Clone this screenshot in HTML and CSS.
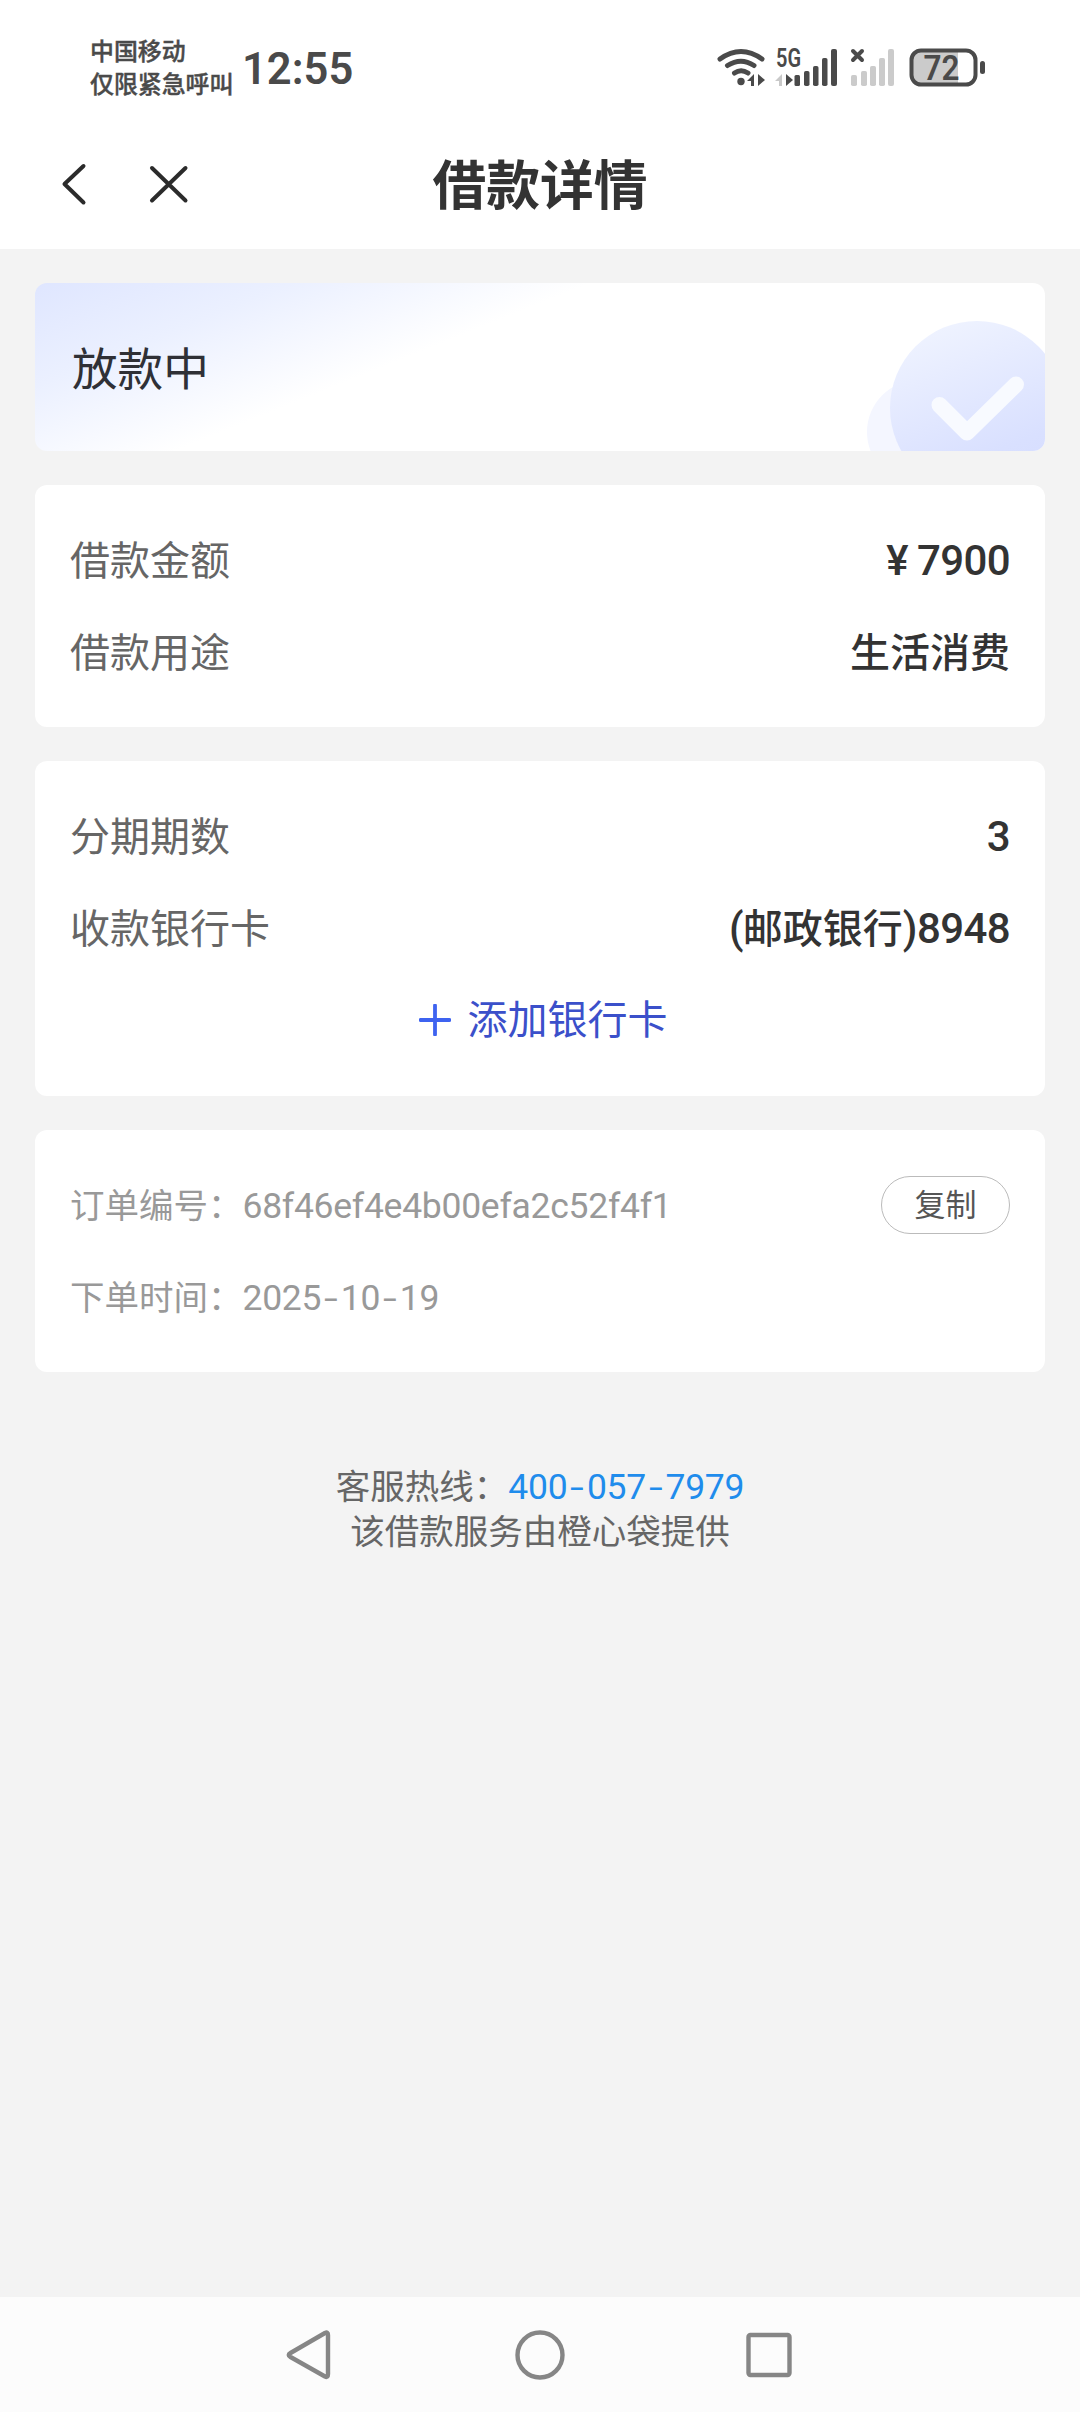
FILE: index.html
```html
<!DOCTYPE html>
<html lang="zh-CN">
<head>
<meta charset="utf-8">
<title>借款详情</title>
<link rel="stylesheet" href="styles.css">
</head>
<body>
<div class="screen">
  <div class="status-bar">
    <div class="carrier"><span>中国移动</span><span>仅限紧急呼叫</span></div>
    <div class="clock">12:55</div>
    <svg class="status-icons" width="300" height="80" viewBox="0 0 300 80">
      <g fill="none" stroke="#4a4a4a" stroke-width="5" stroke-linecap="round">
        <path d="M20 29Q41 14 62 29"/>
        <path d="M27.500 35.500Q41 27 54 35.500"/>
        <path d="M34.500 43Q41 38.500 48 43"/>
      </g>
      <g fill="#4a4a4a">
        <circle cx="41" cy="51.500" r="3.700"/>
        <path d="M47 51L54 44V56H51V51Z"/>
        <path d="M58 44L65 50L58 56Z"/>
        <text class="net" x="76" y="37" textLength="25" lengthAdjust="spacingAndGlyphs">5G</text>
        <path d="M75 51L82 44V56H79V51Z" fill="#c9c9c9"/>
        <path d="M86 44L93 50L86 56Z"/>
        <rect x="94.500" y="45" width="5.500" height="11" rx="1.500"/>
        <rect x="104" y="41" width="5.500" height="15" rx="1.800"/>
        <rect x="113" y="36" width="5.500" height="20" rx="1.800"/>
        <rect x="122" y="28" width="5.500" height="28" rx="1.800"/>
        <rect x="131" y="19" width="6" height="37" rx="2"/>
      </g>
      <path d="M153 21L162 30M162 21L153 30" stroke="#4a4a4a" stroke-width="4" stroke-linecap="round"/>
      <g fill="#cbcbcb">
        <rect x="151" y="45" width="6" height="11" rx="1.800"/>
        <rect x="161" y="41" width="6" height="15" rx="1.800"/>
        <rect x="170" y="36" width="6" height="20" rx="1.800"/>
        <rect x="179" y="28" width="6" height="28" rx="1.800"/>
        <rect x="188" y="19" width="6" height="37" rx="2"/>
      </g>
      <path d="M220 21H258V54H220Q212 54 212 45V30Q212 21 220 21Z" fill="#cbcbcb"/>
      <rect x="211.500" y="20.500" width="64" height="34" rx="9.500" fill="none" stroke="#4a4a4a" stroke-width="4"/>
      <rect x="280" y="31" width="5" height="13" rx="2.500" fill="#4a4a4a"/>
      <text class="level" x="223.500" y="49.500" textLength="36" lengthAdjust="spacingAndGlyphs">72</text>
    </svg>
  </div>
  <header class="title-bar">
    <svg class="nav-icons" width="200" height="112" viewBox="0 0 200 112">
      <g fill="none" stroke="#2b2b2b" stroke-width="4" stroke-linecap="round" stroke-linejoin="round">
        <path d="M83.500 30L64.500 48L83.500 66.500"/>
        <path d="M152 32L185.500 64.500M185.500 32L152 64.500"/>
      </g>
    </svg>
    <h1 class="title">借款详情</h1>
  </header>
  <main class="content">
    <section class="card banner">
      <span class="state">放款中</span>
      <svg class="badge" width="180" height="168" viewBox="0 0 180 168">
        <defs>
          <linearGradient id="disc" x1=".3" y1="0" x2=".7" y2="1">
            <stop offset="0" stop-color="#eff3ff"/><stop offset=".75" stop-color="#d9e0ff"/><stop offset="1" stop-color="#d6ddff"/>
          </linearGradient>
        </defs>
        <circle cx="54" cy="149" r="52" fill="#f4f6ff"/>
        <circle cx="112" cy="125" r="87" fill="url(#disc)"/>
        <path d="M74.500 122L102 149.500L151 101.500" fill="none" stroke="#f8faff" stroke-width="16" stroke-linecap="round" stroke-linejoin="round"/>
      </svg>
    </section>
    <section class="card loan">
      <div class="row"><span class="label">借款金额</span><span class="value"><span class="yen">¥</span><span class="num">7900</span></span></div>
      <div class="row"><span class="label">借款用途</span><span class="value">生活消费</span></div>
    </section>
    <section class="card bank">
      <div class="row"><span class="label">分期期数</span><span class="value"><span class="num">3</span></span></div>
      <div class="row"><span class="label">收款银行卡</span><span class="value"><span class="num">(</span>邮政银行<span class="num">)8948</span></span></div>
      <div class="row add">
        <svg width="32" height="32" viewBox="0 0 32 32"><path d="M16 1.500V30.500M1.500 16H30.500" stroke="#3e63f0" stroke-width="3.800" stroke-linecap="round"/></svg>
        <span>添加银行卡</span>
      </div>
    </section>
    <section class="card order">
      <div class="row"><span>订单编号：<span class="code">68f46ef4e4b00efa2c52f4f1</span></span><button class="copy">复制</button></div>
      <div class="row"><span>下单时间：<span class="code">2025<span class="dash">-</span>10<span class="dash">-</span>19</span></span></div>
    </section>
    <footer class="service">
      <div>客服热线：<span class="phone">400<span class="dash">-</span>057<span class="dash">-</span>7979</span></div>
      <div>该借款服务由橙心袋提供</div>
    </footer>
  </main>
  <nav class="system-nav">
    <svg width="1080" height="115" viewBox="0 0 1080 115">
      <g fill="none" stroke="#868686" stroke-width="4.400" stroke-linejoin="round">
        <path d="M325 36Q328 34.500 328 38V77Q328 81 325 79.500L290.500 60Q287 58 290.500 56Z"/>
        <circle cx="540" cy="58" r="22.500"/>
        <rect x="748.500" y="38" width="41" height="40" rx="2"/>
      </g>
    </svg>
  </nav>
</div>
</body>
</html>
```

FILE: styles.css
```css
* { box-sizing: border-box; }

body {
  margin: 0;
  background: #f3f3f3;
  color: #333;
  font-family: "Noto Sans CJK SC", sans-serif;
}

.screen {
  display: flex;
  flex-direction: column;
  width: 1080px;
  height: 2412px;
  overflow: hidden;
}

.status-bar {
  display: flex;
  height: 136px;
  padding-left: 90px;
  background: #fff;
  color: #4a4a4a;
}

.carrier {
  display: flex;
  flex-direction: column;
  width: 152px;
  padding-top: 33px;
  font-size: 23.9px;
  font-weight: 500;
  line-height: 33px;
  white-space: nowrap;
  -webkit-text-stroke: 0.4px #4a4a4a;
}

.clock {
  width: 121px;
  padding-top: 43px;
  font-family: Roboto, sans-serif;
  font-size: 43.5px;
  font-weight: 600;
  line-height: 54px;
}

.status-icons {
  margin: 30px 0 0 337px;
}

.net, .level {
  fill: #4a4a4a;
  font-family: Roboto, sans-serif;
  font-weight: 600;
}

.net { font-size: 25px; }
.level { font-size: 35px; }

.title-bar {
  display: grid;
  grid-template-columns: 200px 680px 200px;
  height: 113px;
  background: #fff;
}

.title {
  margin: 0;
  font-size: 53.8px;
  font-weight: 700;
  line-height: 91px;
  text-align: center;
}

.content {
  flex: 1;
  display: flex;
  flex-direction: column;
  gap: 34px;
  padding: 34px 35px 0;
}

.card {
  border-radius: 12px;
  background: #fff;
}

.banner {
  display: flex;
  justify-content: space-between;
  height: 168px;
  overflow: hidden;
  background: linear-gradient(158deg, #dfe6ff 0%, #ebf0ff 18%, #fff 39%);
}

.state {
  padding-left: 37px;
  color: #2f3036;
  font-size: 45.6px;
  line-height: 166px;
}

.loan { height: 242px; padding: 27px 35px; }
.bank { height: 335px; padding: 27px 35px; }
.order { height: 242px; padding: 27px 35px; }

.row {
  display: flex;
  align-items: center;
  justify-content: space-between;
  height: 92px;
  font-size: 40px;
  white-space: nowrap;
}

.label { color: #666; }
.value { font-weight: 500; }

.num, .yen {
  font-family: Roboto, sans-serif;
  font-size: 42px;
  letter-spacing: -0.6px;
}

.yen { margin-right: 9px; }

.add {
  justify-content: center;
  gap: 17px;
  height: 89px;
  padding-left: 6px;
  color: #3b50ca;
}

.add svg { margin-top: 6px; }

.order .row {
  color: #999;
  font-size: 34.5px;
}

.code, .phone {
  font-family: Roboto, sans-serif;
  font-size: 35.5px;
  letter-spacing: -0.27px;
  line-height: 1;
}

.dash {
  display: inline-block;
  padding: 0 3px;
  transform: scaleX(1.4);
  margin: 0 2px;
}

.copy {
  width: 129px;
  height: 58px;
  margin-top: 4px;
  padding: 0 0 5px;
  border: 1.5px solid #bbb;
  border-radius: 30px;
  background: #fff;
  color: #555;
  font-family: inherit;
  font-size: 31px;
  line-height: 46px;
}

.service {
  padding-top: 56px;
  color: #666;
  font-size: 34.5px;
  line-height: 45px;
  text-align: center;
}

.phone { color: #1f8cec; }

.system-nav {
  height: 115px;
  background: #fcfcfc;
}
```
